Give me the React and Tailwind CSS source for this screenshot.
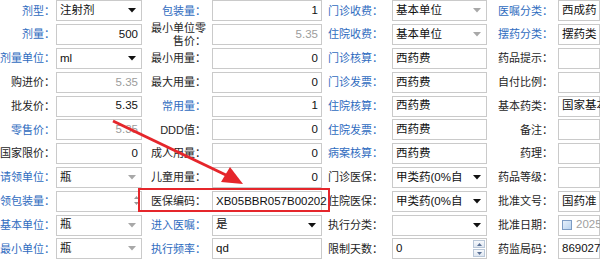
import React from "react";

const BLUE = "text-[#2f6cc0]";
const DARK = "text-[#1e1e1e]";

// one column group = label column + input column
const cols = [
  {
    label: "w-[55px] pr-[0px]",
    input: "w-[86px] ml-[1px]",
    rows: [
      { l: "剂型", blue: true, v: "注射剂", arrow: "dark" },
      { l: "剂量", blue: true, v: "500", right: true },
      { l: "剂量单位", blue: true, v: "ml", arrow: "dark" },
      { l: "购进价", v: "5.35", right: true, dim: true },
      { l: "批发价", v: "5.35", right: true },
      { l: "零售价", blue: true, v: "5.35", right: true, dim: true },
      { l: "国家限价", v: "0", right: true },
      { l: "请领单位", blue: true, v: "瓶", arrow: "light" },
      { l: "请领包装量", blue: true, v: "", spin: "thin" },
      { l: "基本单位", blue: true, v: "瓶", arrow: "light" },
      { l: "最小单位", blue: true, v: "瓶", arrow: "light" },
    ],
  },
  {
    label: "w-[68px] pr-[4px]",
    input: "w-[110px] ml-[2px]",
    rows: [
      { l: "包装量", blue: true, v: "1", right: true },
      { l: "最小单位零售价", wrap: ["最小单位零", "售价："], v: "5.35", right: true, dim: true },
      { l: "最小用量", v: "0", right: true },
      { l: "最大用量", v: "0", right: true },
      { l: "常用量", blue: true, v: "1", right: true },
      { l: "DDD值", v: "0", right: true },
      { l: "成人用量", v: "0", right: true },
      { l: "儿童用量", v: "0", right: true },
      { l: "医保编码", v: "XB05BBR057B00202" },
      { l: "进入医嘱", blue: true, v: "是", arrow: "dark" },
      { l: "执行频率", blue: true, v: "qd" },
    ],
  },
  {
    label: "w-[66px] pr-[5px]",
    input: "w-[95px] ml-[4px]",
    rows: [
      { l: "门诊收费", blue: true, v: "基本单位", arrow: "light" },
      { l: "住院收费", blue: true, v: "基本单位", arrow: "light" },
      { l: "门诊核算", blue: true, v: "西药费" },
      { l: "门诊发票", blue: true, v: "西药费" },
      { l: "住院核算", blue: true, v: "西药费" },
      { l: "住院发票", blue: true, v: "西药费" },
      { l: "病案核算", blue: true, v: "西药费" },
      { l: "门诊医保", v: "甲类药(0%自", arrow: "dark" },
      { l: "住院医保", v: "甲类药(0%自", arrow: "dark" },
      { l: "执行分类", v: "", arrow: "dark" },
      { l: "限制天数", v: "0", spin: "box" },
    ],
  },
  {
    label: "w-[69px] pr-[3px]",
    input: "w-[42px] ml-[2px]",
    rows: [
      { l: "医嘱分类", blue: true, v: "西成药" },
      { l: "摆药分类", blue: true, v: "摆药类" },
      { l: "药品提示", v: "" },
      { l: "自付比例", v: "" },
      { l: "基本药类", v: "国家基本" },
      { l: "备注", v: "" },
      { l: "药理", v: "" },
      { l: "药品等级", v: "" },
      { l: "批准文号", v: "国药准" },
      { l: "批准日期", v: "2025", check: true },
      { l: "药监局码", v: "869027" },
    ],
  },
];

function Arrow({ tone }) {
  return (
    <svg width="8" height="5" viewBox="0 0 8 5" className="shrink-0 ml-[2px] mr-[2px]">
      <path d="M0 0 H8 L4 4.5 Z" fill={tone === "dark" ? "#111" : "#a8a8a8"} />
    </svg>
  );
}

function Spinner({ kind }) {
  if (kind === "thin") {
    return (
      <div className="absolute right-[2px] top-[4px] flex flex-col gap-[3px]">
        <svg width="5" height="3" viewBox="0 0 5 3"><path d="M0 3 L2.5 0 L5 3 Z" fill="#9a9a9a" /></svg>
        <svg width="5" height="3" viewBox="0 0 5 3"><path d="M0 0 L2.5 3 L5 0 Z" fill="#9a9a9a" /></svg>
      </div>
    );
  }
  return (
    <div className="absolute right-[1px] top-[1px] bottom-[1px] w-[12px] flex flex-col gap-[1px]">
      <div className="flex-1 border border-[#b9c7d8] bg-gradient-to-b from-[#f7f9fc] to-[#dfe7f1] flex items-center justify-center">
        <svg width="5" height="3" viewBox="0 0 5 3"><path d="M0 3 L2.5 0 L5 3 Z" fill="#5a7196" /></svg>
      </div>
      <div className="flex-1 border border-[#b9c7d8] bg-gradient-to-b from-[#f7f9fc] to-[#dfe7f1] flex items-center justify-center">
        <svg width="5" height="3" viewBox="0 0 5 3"><path d="M0 0 L2.5 3 L5 0 Z" fill="#5a7196" /></svg>
      </div>
    </div>
  );
}

function Field({ f, col }) {
  return (
    <div className="flex items-center h-[23.8px]">
      <div
        className={`${col.label} shrink-0 flex justify-end whitespace-nowrap text-[11px] ${
          f.blue ? BLUE : DARK
        }`}
      >
        {f.wrap ? (
          <span className="text-right leading-[13px]">
            {f.wrap[0]}
            <br />
            {f.wrap[1]}
          </span>
        ) : (
          <span>{f.l}：</span>
        )}
      </div>
      <div
        className={`${col.input} relative shrink-0 h-[21px] border border-[#cacaca] bg-white flex items-center pl-[3px] pr-[3px] whitespace-nowrap text-[11.5px] ${
          f.dim ? "text-[#9c9c9c]" : "text-[#111]"
        } ${f.right ? "justify-end" : ""}`}
      >
        {f.check && (
          <span className="shrink-0 w-[10px] h-[10px] mr-[4px] border border-[#7d9cc4] bg-gradient-to-br from-[#e6f0fb] to-[#b9d3ef]" />
        )}
        <span className={`${f.arrow ? "flex-1 min-w-0 overflow-hidden" : ""} ${f.check ? "text-[#a0a0a0]" : ""}`}>
          {f.v}
        </span>
        {f.arrow && <Arrow tone={f.arrow} />}
        {f.spin && <Spinner kind={f.spin} />}
      </div>
    </div>
  );
}

export default function App() {
  return (
    <div
      className="relative w-[600px] h-[261px] overflow-hidden bg-white"
      style={{ fontFamily: '"Liberation Sans", "Noto Sans CJK SC", sans-serif' }}
    >
      <div className="flex mt-[-1px]">
        {cols.map((col, i) => (
          <div key={i} className="flex flex-col shrink-0">
            {col.rows.map((f) => (
              <Field key={f.l} f={f} col={col} />
            ))}
          </div>
        ))}
      </div>

      {/* red annotation box */}
      <div className="absolute left-[138px] top-[188px] w-[192px] h-[24px] border-2 border-[#e5262b]" />

      {/* red annotation arrow */}
      <svg className="absolute left-0 top-0 pointer-events-none" width="600" height="261">
        <line x1="113" y1="121" x2="228" y2="176" stroke="#e5262b" strokeWidth="3" />
        <path d="M243 184 L221 182 L230 167 Z" fill="#e5262b" />
      </svg>
    </div>
  );
}
